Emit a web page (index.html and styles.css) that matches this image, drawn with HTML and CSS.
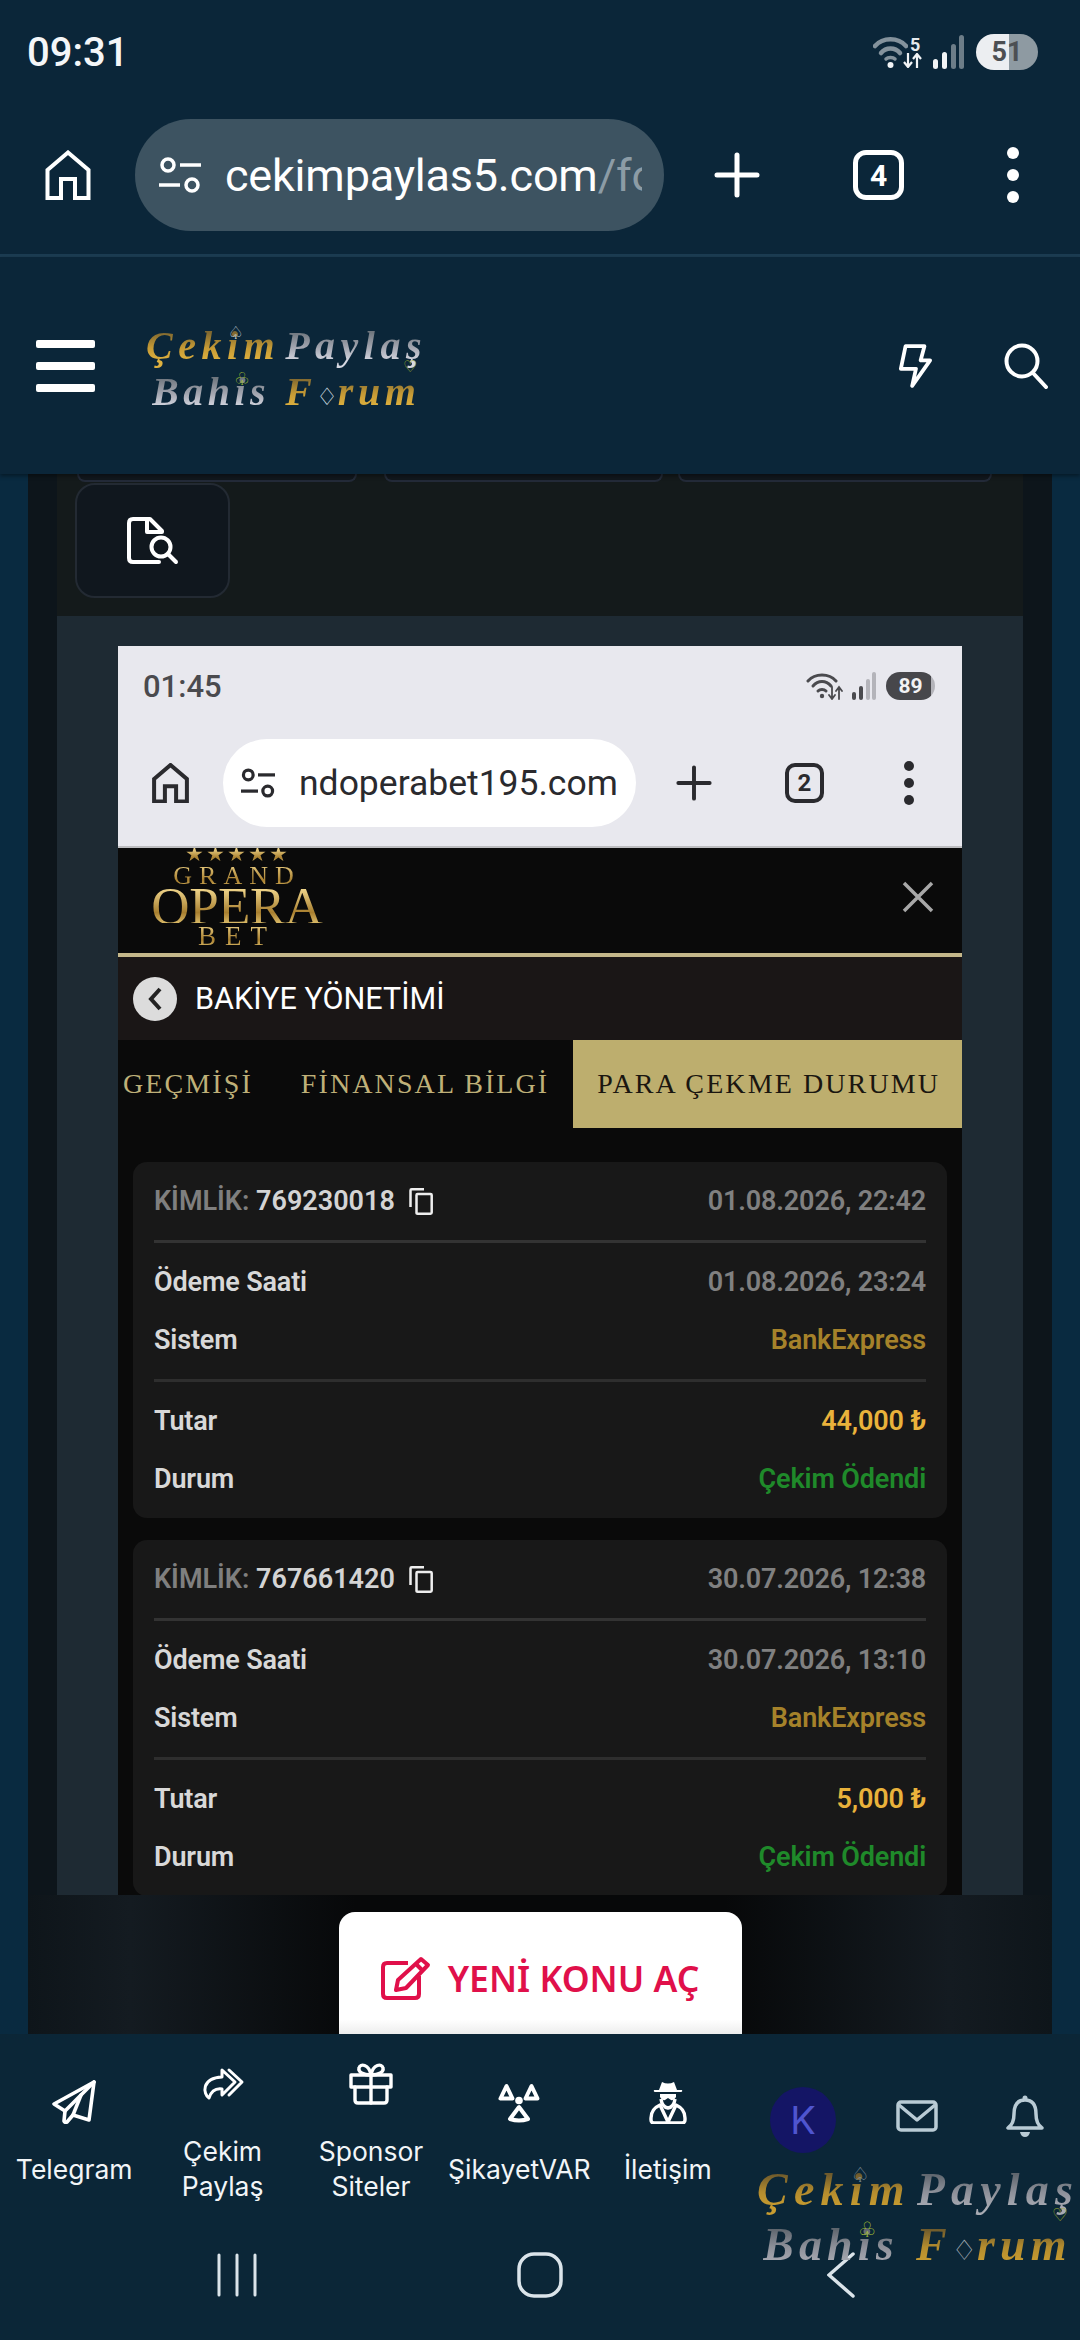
FILE: index.html
```html
<!DOCTYPE html>
<html lang="tr">
<head>
<meta charset="utf-8">
<title>Çekim Paylaş</title>
<link rel="stylesheet" href="styles.css">
</head>
<body>
<div class="page">

  <header class="chrome">
    <div class="status">
      <span class="clock">09:31</span>
      <div class="status-icons">
        <svg class="st-wifi" width="35" height="34" viewBox="0 0 35 34" fill="none"><path d="M2 11C10 2 25 2 33 11" stroke="#84929c" stroke-width="4.500" stroke-linecap="round"/><path d="M8 18C13 12 22 12 27 18" stroke="#84929c" stroke-width="4.500" stroke-linecap="round"/><path d="M13 24C15 22 20 22 22 24" stroke="#84929c" stroke-width="3.500" stroke-linecap="round"/><circle cx="17.500" cy="30" r="3" fill="#f2f4f6"/></svg>
        <div class="st-net">
          <span class="st-five">5</span>
          <svg width="20" height="15" viewBox="0 0 20 15" fill="none" stroke="#f2f4f6" stroke-width="2.200"><path d="M6 0V13M2 9L6 14L10 9"/><path d="M15 15V2M11 6L15 1L19 6"/></svg>
        </div>
        <svg class="st-signal" width="31" height="34" viewBox="0 0 31 34"><rect x="0" y="24" width="5" height="10" rx="2.500" fill="#f2f4f6"/><rect x="9" y="17" width="5" height="17" rx="2.500" fill="#f2f4f6"/><rect x="18" y="9" width="5" height="25" rx="2.500" fill="#6d7d88"/><rect x="26" y="0" width="5" height="34" rx="2.500" fill="#6d7d88"/></svg>
        <span class="battery">51</span>
      </div>
    </div>
    <div class="toolbar">
      <svg class="tb-home" width="46" height="50" viewBox="0 0 46 50" fill="none" stroke="#fff" stroke-width="4"><path d="M2.500 20L23 2.500L43.500 20V48H30V29H16V48H2.500Z"/></svg>
      <div class="pill">
        <svg class="pill-tune" width="42" height="36" viewBox="0 0 42 36" fill="none" stroke="#fff" stroke-width="3.500"><circle cx="9" cy="8" r="6"/><path d="M21 8H42"/><path d="M0 28H21"/><circle cx="33" cy="28" r="6"/></svg>
        <span class="url">cekimpaylas5.com<span class="url-path">/forum</span></span>
      </div>
      <svg class="tb-plus" width="46" height="46" viewBox="0 0 46 46" stroke="#fff" stroke-width="5" stroke-linecap="round"><path d="M23 3V43M3 23H43"/></svg>
      <span class="tabs-count">4</span>
      <div class="dots"><i></i><i></i><i></i></div>
    </div>
  </header>

  <div class="site-head">
    <div class="burger"><i></i><i></i><i></i></div>
    <div class="logo">
      <div class="logo-line"><span class="gold">Çeki</span><span class="suit suit-spade">♤</span><span class="gold">m</span><span class="silver logo-gap">Paylaş</span><span class="suit suit-heart">♡</span></div>
      <div class="logo-line logo-second"><span class="silver">Bahi</span><span class="suit suit-club">♧</span><span class="silver">s</span><span class="gold logo-word">F</span><span class="diamond">♢</span><span class="gold">rum</span></div>
    </div>
    <div class="head-actions">
      <svg width="34" height="44" viewBox="0 0 36 46" fill="none" stroke="#fff" stroke-width="4" stroke-linejoin="round"><path d="M8 2H28L24 17H34L15 44L19 26H3Z"/></svg>
      <svg width="44" height="46" viewBox="0 0 44 46" fill="none" stroke="#fff" stroke-width="4" stroke-linecap="round"><circle cx="18" cy="18" r="15.500"/><path d="M29 30L42 44"/></svg>
    </div>
  </div>

  <main class="content">
    <div class="frame">
      <section class="panel">
        <div class="chips"><i class="chip chip-a"></i><i class="chip chip-b"></i><i class="chip chip-c"></i></div>
        <div class="tool-btn">
          <svg width="52" height="48" viewBox="0 0 52 48" fill="none" stroke="#fff" stroke-width="4" stroke-linecap="round" stroke-linejoin="round"><path d="M32 45H6Q2 45 2 41V6Q2 2 6 2H21"/><path d="M20 2H23L35 14V15H20Z"/><circle cx="34" cy="30" r="9.500"/><path d="M41 37L49 45"/></svg>
        </div>
      </section>

      <section class="post">
        <div class="shot">
          <div class="shot-chrome">
            <div class="shot-status">
              <span class="shot-clock">01:45</span>
              <div class="shot-icons">
                <svg width="38" height="28" viewBox="0 0 38 28" fill="none" stroke="#4a4a4e" stroke-linecap="round"><path d="M2 9C9 1 23 1 30 9" stroke-width="3"/><path d="M7 14C12 8 20 8 25 14" stroke-width="3"/><path d="M12 19C14 17 18 17 20 19" stroke-width="3"/><circle cx="16" cy="24" r="2.200" fill="#4a4a4e" stroke="none"/><path d="M26 15V26M23 23L26 27L29 23M33 27V16M30 19L33 15L36 19" stroke-width="1.800"/></svg>
                <svg class="shot-signal" width="24" height="28" viewBox="0 0 24 28"><rect x="0" y="20" width="4" height="8" rx="2" fill="#4a4a4e"/><rect x="7" y="14" width="4" height="14" rx="2" fill="#4a4a4e"/><rect x="14" y="7" width="4" height="21" rx="2" fill="#b4b4ba"/><rect x="20" y="0" width="4" height="28" rx="2" fill="#b4b4ba"/></svg>
                <span class="shot-battery">89</span>
              </div>
            </div>
            <div class="shot-toolbar">
              <svg class="shot-home" width="37" height="40" viewBox="0 0 46 50" fill="none" stroke="#2a2a2e" stroke-width="5"><path d="M2.500 20L23 2.500L43.500 20V48H30V29H16V48H2.500Z"/></svg>
              <div class="shot-pill">
                <svg class="shot-tune" width="34" height="30" viewBox="0 0 42 36" fill="none" stroke="#2a2a2e" stroke-width="4"><circle cx="9" cy="8" r="6"/><path d="M21 8H42"/><path d="M0 28H21"/><circle cx="33" cy="28" r="6"/></svg>
                <span class="shot-url">ndoperabet195.com</span>
              </div>
              <svg class="shot-plus" width="36" height="36" viewBox="0 0 46 46" stroke="#2a2a2e" stroke-width="5" stroke-linecap="round"><path d="M23 3V43M3 23H43"/></svg>
              <span class="shot-tabs">2</span>
              <div class="shot-dots"><i></i><i></i><i></i></div>
            </div>
          </div>

          <div class="brand-bar">
            <div class="opera">
              <span class="op-stars">★★★★★</span>
              <span class="op-grand">GRAND</span>
              <span class="op-main">OPERA</span>
              <span class="op-bet">BET</span>
            </div>
            <svg class="brand-close" width="32" height="32" viewBox="0 0 32 32" stroke="#a8a8a8" stroke-width="3.500"><path d="M2 2L30 30M30 2L2 30"/></svg>
          </div>

          <div class="balance-bar">
            <span class="back-circle"><svg width="16" height="24" viewBox="0 0 16 24" fill="none" stroke="#222" stroke-width="4"><path d="M13 2L4 12L13 22"/></svg></span>
            <span class="balance-title">BAKİYE YÖNETİMİ</span>
          </div>

          <nav class="tabs">
            <span class="tab tab-hist">GEÇMİŞİ</span>
            <span class="tab tab-info">FİNANSAL BİLGİ</span>
            <span class="tab tab-active">PARA ÇEKME DURUMU</span>
          </nav>

          <div class="cards">
            <article class="card">
              <div class="card-head">
                <span class="kimlik">KİMLİK: <b>769230018</b></span>
                <svg class="copy" width="24" height="27" viewBox="0 0 24 27" fill="none" stroke="#eee" stroke-width="2.500"><path d="M7.500 25.500V7Q7.500 6 8.500 6H21.500Q22.700 6 22.700 7V24.500Q22.700 25.700 21.500 25.700H8.500Q7.500 25.700 7.500 25Z"/><path d="M1.500 19V2.500Q1.500 1.300 2.700 1.300H15"/></svg>
                <span class="muted">01.08.2026, 22:42</span>
              </div>
              <div class="card-group">
                <div class="row"><span>Ödeme Saati</span><span class="muted">01.08.2026, 23:24</span></div>
                <div class="row"><span>Sistem</span><span class="bank">BankExpress</span></div>
              </div>
              <div class="card-group card-last">
                <div class="row"><span>Tutar</span><span class="amount">44,000 ₺</span></div>
                <div class="row"><span>Durum</span><span class="paid">Çekim Ödendi</span></div>
              </div>
            </article>
            <article class="card">
              <div class="card-head">
                <span class="kimlik">KİMLİK: <b>767661420</b></span>
                <svg class="copy" width="24" height="27" viewBox="0 0 24 27" fill="none" stroke="#eee" stroke-width="2.500"><path d="M7.500 25.500V7Q7.500 6 8.500 6H21.500Q22.700 6 22.700 7V24.500Q22.700 25.700 21.500 25.700H8.500Q7.500 25.700 7.500 25Z"/><path d="M1.500 19V2.500Q1.500 1.300 2.700 1.300H15"/></svg>
                <span class="muted">30.07.2026, 12:38</span>
              </div>
              <div class="card-group">
                <div class="row"><span>Ödeme Saati</span><span class="muted">30.07.2026, 13:10</span></div>
                <div class="row"><span>Sistem</span><span class="bank">BankExpress</span></div>
              </div>
              <div class="card-group card-last">
                <div class="row"><span>Tutar</span><span class="amount">5,000 ₺</span></div>
                <div class="row"><span>Durum</span><span class="paid">Çekim Ödendi</span></div>
              </div>
            </article>
          </div>
        </div>
      </section>

      <div class="sticky-foot">
        <div class="new-topic">
          <svg width="50" height="44" viewBox="0 0 50 44" fill="none" stroke="#e0104a" stroke-width="4" stroke-linejoin="round"><path d="M27 7H6Q2 7 2 11V38Q2 42 6 42H34Q38 42 38 38V20"/><path d="M40 3L47 9L25 32L15 34L17 24Z"/><path d="M35 8L42 15"/></svg>
          <span>YENİ KONU AÇ</span>
        </div>
      </div>
    </div>
  </main>

  <footer class="bottom">
    <div class="bottom-row">
      <nav class="quick">
        <a class="quick-item">
          <svg width="44" height="44" viewBox="0 0 44 44" fill="none" stroke="#fff" stroke-width="3.600" stroke-linejoin="round" stroke-linecap="round"><path d="M42 2L2 24L13 31L12 41Q12.500 43 15 42L21 35L37 40Z"/><path d="M42 2L13 31"/><path d="M29 15L21 35"/></svg>
          <span>Telegram</span>
        </a>
        <a class="quick-item">
          <svg width="44" height="44" viewBox="0 0 44 44" fill="none" stroke="#fff" stroke-width="3" stroke-linejoin="round" stroke-linecap="round"><path d="M21 8L34 20L21 33V27C14 26 10 30 8 36C2 32 0 16 21 15Z"/><path d="M28 8L41 20L28 33"/></svg>
          <span>Çekim<br>Paylaş</span>
        </a>
        <a class="quick-item">
          <svg width="44" height="44" viewBox="0 0 44 44" fill="none" stroke="#fff" stroke-width="3.400" stroke-linejoin="round" stroke-linecap="round"><path d="M2 13H42V25H38V38Q38 41 35 41H9Q6 41 6 38V25H2Z"/><path d="M6 25H38"/><path d="M22 13V41"/><path d="M22 13C14 13 9 10 10 6C11 1 20 2 22 13C24 2 33 1 34 6C35 10 30 13 22 13Z"/></svg>
          <span>Sponsor<br>Siteler</span>
        </a>
        <a class="quick-item">
          <svg width="44" height="44" viewBox="0 0 44 44" fill="none" stroke="#fff" stroke-width="4" stroke-linejoin="round"><path d="M9.500 6L3.500 18.500H15.500Z"/><path d="M34.500 6L28.500 18.500H40.500Z"/><path d="M22 27L13 39Q22 42 31 39Z"/><circle cx="22" cy="20.500" r="3.800" fill="#fff" stroke="none"/></svg>
          <span>ŞikayetVAR</span>
        </a>
        <a class="quick-item">
          <svg width="44" height="44" viewBox="0 0 44 44" fill="none" stroke="#fff" stroke-width="3.400" stroke-linejoin="round"><path d="M16 2Q22 5 28 2L31 10H36Q37 12 34 12H10Q7 12 8 10H13Z" fill="#fff" stroke="none"/><path d="M14 14H30V17Q28 21 25 20L22 18L19 20Q16 21 14 17Z" fill="#fff" stroke="none"/><path d="M15 19Q16 27 22 28Q28 27 29 19"/><path d="M14 25Q5 29 5 38V40Q5 43 8 43H36Q39 43 39 40V38Q39 29 30 25L22 42Z"/></svg>
          <span>İletişim</span>
        </a>
      </nav>
      <div class="account">
        <span class="avatar">K</span>
        <svg class="acc-mail" width="42" height="32" viewBox="0 0 42 32" fill="none" stroke="#b9cbd5" stroke-width="3.500" stroke-linejoin="round"><rect x="2" y="2" width="38" height="28" rx="3"/><path d="M3 5L21 20L39 5"/></svg>
        <svg class="acc-bell" width="38" height="44" viewBox="0 0 38 44" fill="none" stroke="#b9cbd5" stroke-width="3.500" stroke-linejoin="round"><path d="M19 6C10 6 8 13 8 20C8 28 5 32 2 34H36C33 32 30 28 30 20C30 13 28 6 19 6Z"/><circle cx="19" cy="4" r="2.500" fill="#b9cbd5" stroke="none"/><path d="M14 38H24Q23 43 19 43Q15 43 14 38Z" fill="#b9cbd5" stroke="none"/></svg>
      </div>
    </div>
    <div class="keys">
      <svg class="key-recent" width="40" height="44" viewBox="0 0 40 44" stroke="#dbe4ea" stroke-width="3" stroke-linecap="round"><path d="M2 2V42M20 2V42M38 2V42"/></svg>
      <svg class="key-home" width="46" height="46" viewBox="0 0 46 46" fill="none" stroke="#dbe4ea" stroke-width="3.500"><rect x="2" y="2" width="42" height="42" rx="15"/></svg>
      <svg class="key-back" width="28" height="46" viewBox="0 0 28 46" fill="none" stroke="#dbe4ea" stroke-width="3.500" stroke-linecap="round"><path d="M26 2L2 23L26 44"/></svg>
    </div>
    <div class="logo logo-watermark">
      <div class="logo-line"><span class="gold">Çeki</span><span class="suit suit-spade">♤</span><span class="gold">m</span><span class="silver logo-gap">Paylaş</span><span class="suit suit-heart">♡</span></div>
      <div class="logo-line logo-second"><span class="silver">Bahi</span><span class="suit suit-club">♧</span><span class="silver">s</span><span class="gold logo-word">F</span><span class="diamond">♢</span><span class="gold">rum</span></div>
    </div>
  </footer>
</div>
</body>
</html>
```

FILE: styles.css
```css
* { box-sizing: border-box; }
html, body { margin: 0; padding: 0; }
body { width: 1080px; height: 2340px; overflow: hidden; background: #0b2639; font-family: Roboto, "Liberation Sans", sans-serif; color: #fff; }
svg { display: block; flex: none; }
.page { width: 1080px; height: 2340px; display: flex; flex-direction: column; }

/* browser chrome */
.chrome { height: 257px; background: #0b2639; border-bottom: 3px solid #1c3c52; }
.status { height: 104px; padding: 0 42px 0 27px; display: flex; align-items: center; justify-content: space-between; }
.clock { font-size: 40px; font-weight: 500; color: #f4f6f8; }
.status-icons { display: flex; align-items: center; }
.st-net { display: flex; flex-direction: column; align-items: flex-start; margin-left: -6px; width: 20px; }
.st-five { font-size: 18px; font-weight: 700; line-height: 17px; color: #e6eaee; margin-left: 8px; }
.st-signal { margin-left: 11px; }
.battery { margin-left: 12px; width: 62px; height: 36px; border-radius: 18px; background: linear-gradient(90deg, #eceef1 0 53%, #8e9aa2 53% 100%); color: #4c4f53; font-size: 27px; font-weight: 700; display: flex; align-items: center; justify-content: center; }
.toolbar { margin-top: 15px; height: 112px; display: flex; align-items: center; padding-left: 45px; }
.pill { margin-left: 44px; width: 529px; height: 112px; border-radius: 56px; background: #3d5361; display: flex; align-items: center; padding-left: 24px; }
.url { margin-left: 24px; width: 417px; overflow: hidden; white-space: nowrap; font-size: 45px; color: #fff; letter-spacing: -0.2px; }
.url-path { color: #8c9ca6; }
.tb-plus { margin-left: 50px; }
.tabs-count { margin-left: 93px; width: 51px; height: 50px; border: 5px solid #fff; border-radius: 13px; display: flex; align-items: center; justify-content: center; font-size: 30px; font-weight: 700; }
.dots { margin-left: 103px; display: flex; flex-direction: column; gap: 10px; }
.dots i { display: block; width: 12px; height: 12px; border-radius: 50%; background: #fff; }

/* site header */
.site-head { height: 217px; background: #0b2639; padding: 0 32px 0 36px; display: flex; align-items: center; box-shadow: 0 2px 4px rgba(0,0,0,.4); position: relative; z-index: 2; }
.burger { width: 59px; display: flex; flex-direction: column; gap: 14px; margin-right: 51px; }
.burger i { display: block; height: 8px; border-radius: 2px; background: #fff; }
.head-actions { margin-left: auto; display: flex; align-items: center; gap: 72px; }

/* logo */
.logo { font-family: "Liberation Serif", serif; font-style: italic; font-weight: 700; font-size: 40px; line-height: 46px; width: 284px; margin-top: 6px; }
.logo-line { white-space: nowrap; height: 46px; letter-spacing: 5.5px; }
.logo-second { padding-left: 6px; letter-spacing: 4.5px; }
.gold, .silver { -webkit-background-clip: text; background-clip: text; color: transparent; }
.gold { background-image: linear-gradient(180deg, #7e6730 20%, #c59a35 55%, #e0b23f 85%); }
.silver { background-image: linear-gradient(180deg, #6f767e 20%, #a3a6b0 55%, #d6d8e2 85%); }
.logo-gap { margin-left: 5px; }
.logo-word { margin-left: 15px; }
.suit { display: inline-block; width: 0; position: relative; font-family: "DejaVu Sans", sans-serif; font-style: normal; font-weight: 400; font-size: 18px; letter-spacing: 0; }
.suit-spade { color: #c3ced8; left: -16px; top: -20px; }
.suit-heart { color: #9fb02f; left: -24px; top: 13px; font-size: 16px; }
.suit-club { color: #a6c033; left: -16px; top: -20px; }
.diamond { font-family: "DejaVu Sans", sans-serif; font-style: normal; font-weight: 400; font-size: 24px; color: #dfe3ea; letter-spacing: 0; }
.logo-watermark { position: absolute; left: 757px; top: 128px; margin-top: 0; font-size: 46px; line-height: 55px; width: 323px; }
.logo-watermark .logo-line { height: 55px; letter-spacing: 6.2px; }
.logo-watermark .logo-second { letter-spacing: 5.2px; }
.logo-watermark .logo-gap { margin-left: 6px; }
.logo-watermark .logo-word { margin-left: 17px; }
.logo-watermark .gold { background-image: linear-gradient(180deg, #6e5a2c 20%, #b48c2e 55%, #c89c30 85%); }
.logo-watermark .silver { background-image: linear-gradient(180deg, #5f666e 20%, #8d9099 55%, #a8aab2 85%); }
.logo-watermark .suit { font-size: 21px; }
.logo-watermark .diamond { font-size: 28px; color: #a8b0b8; }
.logo-watermark .suit-spade { left: -18px; top: -23px; color: #7e8f9a; }
.logo-watermark .suit-heart { left: -27px; top: 16px; font-size: 18px; }
.logo-watermark .suit-club { left: -18px; top: -23px; }

/* content */
.content { height: 1560px; overflow: hidden; padding: 0 28px; background: #092a40; }
.frame { height: 1560px; background: #0d151b; display: flex; flex-direction: column; }
.panel { height: 142px; margin: 0 29px; padding-left: 18px; background: #141a1b; flex: none; }
.chips { height: 8px; display: flex; margin-left: 2px; }
.chip { display: block; height: 8px; border: 2px solid #232a38; border-top: 0; border-radius: 0 0 14px 14px; background: #11171d; }
.chip-a { width: 280px; }
.chip-b { width: 279px; margin-left: 27px; }
.chip-c { width: 314px; margin-left: 15px; }
.tool-btn { margin-top: 1px; width: 155px; height: 115px; border: 2px solid #232a33; border-radius: 20px; background: #10171e; display: flex; align-items: center; justify-content: center; }
.post { flex: none; height: 1279px; margin: 0 29px; padding: 30px 61px 0; background: #1e2a33; overflow: hidden; }
.shot { width: 844px; background: #0a0a0a; }

/* embedded phone shot */
.shot-chrome { height: 202px; background: #e8e8ee; border-bottom: 2px solid #bdbdc0; color: #2a2a2e; }
.shot-status { height: 80px; padding: 0 27px 0 25px; display: flex; align-items: center; justify-content: space-between; }
.shot-clock { font-size: 31px; font-weight: 500; color: #4a4a4e; }
.shot-icons { display: flex; align-items: center; }
.shot-signal { margin-left: 8px; }
.shot-battery { margin-left: 10px; width: 49px; height: 28px; border-radius: 14px; background: linear-gradient(90deg, #47474b 0 92%, #b4b4ba 92% 100%); color: #f2f2f4; font-size: 21px; font-weight: 700; display: flex; align-items: center; justify-content: center; }
.shot-toolbar { margin-top: 13px; height: 88px; display: flex; align-items: center; padding-left: 34px; }
.shot-pill { margin-left: 34px; width: 413px; height: 88px; border-radius: 44px; background: #fff; display: flex; align-items: center; padding-left: 18px; }
.shot-url { margin-left: 24px; white-space: nowrap; font-size: 35.500px; color: #2a2a2e; }
.shot-plus { margin-left: 40px; }
.shot-tabs { margin-left: 73px; width: 39px; height: 40px; border: 4px solid #2a2a2e; border-radius: 10px; display: flex; align-items: center; justify-content: center; font-size: 24px; font-weight: 700; }
.shot-dots { margin-left: 80px; display: flex; flex-direction: column; gap: 7px; }
.shot-dots i { display: block; width: 10px; height: 10px; border-radius: 50%; background: #2a2a2e; }
.brand-bar { height: 109px; background: #0a0a0a; border-bottom: 4px solid #c4b78a; display: flex; justify-content: space-between; padding: 0 28px 0 29px; }
.opera { width: 180px; display: flex; flex-direction: column; align-items: center; font-family: "Liberation Serif", serif; overflow: hidden; }
.opera span { display: block; -webkit-background-clip: text; background-clip: text; color: transparent; background-image: linear-gradient(180deg, #f2d88e, #a87f2f 70%, #d8b866); }
.op-stars { height: 14px; line-height: 12px; font-size: 21px; letter-spacing: 2px; }
.op-grand { height: 26px; line-height: 28px; font-size: 26px; letter-spacing: 7px; }
.op-main { height: 35px; line-height: 36px; font-size: 53px; letter-spacing: -0.500px; }
.op-bet { height: 24px; line-height: 26px; font-size: 27px; letter-spacing: 9px; }
.brand-close { margin-top: 33px; }
.balance-bar { height: 83px; background: #1a1616; padding-left: 15px; display: flex; align-items: center; gap: 18px; }
.back-circle { width: 44px; height: 44px; border-radius: 50%; background: #dcdcdc; display: flex; align-items: center; justify-content: center; }
.balance-title { font-size: 30.600px; color: #fff; }
.tabs { height: 88px; display: flex; align-items: stretch; background: #0a0a0a; font-family: "Liberation Serif", serif; font-size: 28px; letter-spacing: 2.100px; color: #bfb078; overflow: hidden; }
.tab { display: flex; align-items: center; white-space: nowrap; }
.tab-hist { margin-left: 5px; }
.tab-info { margin-left: 48px; }
.tab-active { margin-left: 24px; flex: 1; padding-left: 24px; background: #bdae6e; color: #1a1610; }
.cards { padding: 34px 15px 0; display: flex; flex-direction: column; gap: 22px; background: #0a0a0a; }
.card { height: 356px; flex: none; background: #181818; border-radius: 14px; padding: 0 21px; font-size: 27px; font-weight: 600; letter-spacing: -0.150px; color: #d8d8d8; }
.card-head { height: 81px; border-bottom: 3px solid #333; display: flex; align-items: center; }
.kimlik { color: #7f7f7f; letter-spacing: 0; }
.kimlik b { font-weight: 600; color: #d4d4d4; }
.copy { margin-left: 14px; }
.card-head .muted { margin-left: auto; }
.muted { color: #808080; }
.card-group { padding: 10px 0; border-bottom: 3px solid #2e2e2e; }
.card-last { border-bottom: 0; }
.row { height: 58px; display: flex; align-items: center; justify-content: space-between; }
.bank { color: #a5822a; }
.amount { color: #e9b23b; }
.paid { color: #1f8a2a; }

/* sticky new-topic bar */
.sticky-foot { flex: none; height: 139px; padding-top: 17px; display: flex; justify-content: center; background: linear-gradient(90deg, #0e151a 0, #141b21 10%, #070809 32%, #070809 68%, #141b21 90%, #0e151a 100%); }
.new-topic { width: 403px; height: 122px; border-radius: 16px 16px 0 0; background: linear-gradient(180deg, #fff 88%, #ededed 100%); display: flex; align-items: center; justify-content: center; gap: 17px; color: #e0104a; font-family: "Noto Sans", sans-serif; font-weight: 600; font-size: 35.500px; padding-top: 10px; }

/* bottom bar */
.bottom { flex: 1; background: #0b2637; position: relative; }
.bottom-row { height: 198px; display: flex; }
.quick { width: 742px; display: flex; align-items: center; }
.quick-item { width: 148.400px; display: flex; flex-direction: column; align-items: center; gap: 28px; font-family: Inter, sans-serif; font-size: 26.500px; line-height: 35px; text-align: center; color: #f2f5f7; white-space: nowrap; }
.account { display: flex; align-items: flex-start; padding-top: 53px; }
.avatar { margin-left: 28px; width: 66px; height: 66px; border-radius: 50%; background: #141565; color: #4f55cf; font-family: Inter, sans-serif; font-size: 38px; display: flex; align-items: center; justify-content: center; }
.acc-mail { margin: 13px 0 0 60px; }
.acc-bell { margin: 7px 0 0 68px; }
.keys { display: flex; align-items: center; padding: 20px 0 0 217px; }
.key-home { margin-left: 260px; }
.key-back { margin-left: 264px; }
```
